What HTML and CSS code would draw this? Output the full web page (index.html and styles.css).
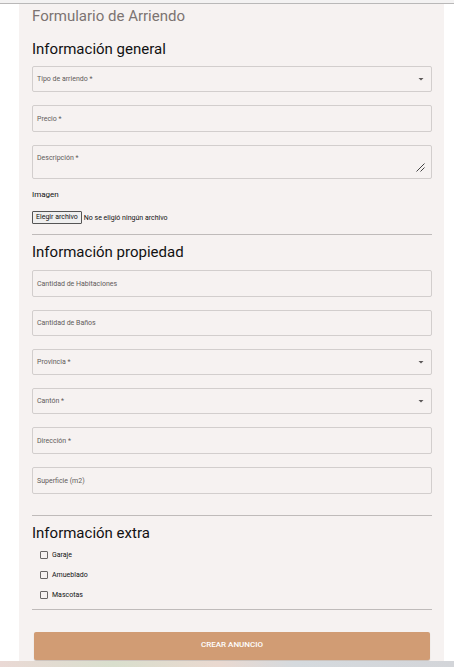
FILE: index.html
```html
<!DOCTYPE html>
<html lang="es">
<head>
<meta charset="utf-8">
<meta name="viewport" content="width=device-width, initial-scale=1">
<title>Formulario de Arriendo</title>
<link rel="stylesheet" href="styles.css">
</head>
<body>
<div class="topbar"></div>
<main class="card">
  <h1 class="title">Formulario de Arriendo</h1>
  <form class="form">
    <section class="section">
      <h2 class="heading">Información general</h2>
      <div class="fields">
        <div class="field field-select">
          <select class="control" id="tipo" required><option value=""></option></select>
          <label class="label" for="tipo">Tipo de arriendo *</label>
          <svg class="arrow" viewBox="0 0 6 3" aria-hidden="true"><path d="M.5 0h5L3 2.500z"/></svg>
        </div>
        <div class="field">
          <input class="control" id="precio" type="text" required>
          <label class="label" for="precio">Precio *</label>
        </div>
        <div class="field field-area">
          <textarea class="control" id="descripcion" required></textarea>
          <label class="label" for="descripcion">Descripción *</label>
          <svg class="grip" viewBox="0 0 9 9" aria-hidden="true"><path d="M.5 8.500L8.500.5M4.500 8.500L8.500 4.500"/></svg>
        </div>
      </div>
      <p class="caption">Imagen</p>
      <div class="file">
        <input class="file-input" id="imagen" type="file">
        <label class="file-button" for="imagen">Elegir archivo</label>
        <span class="file-name">No se eligió ningún archivo</span>
      </div>
    </section>
    <section class="section section-property">
      <h2 class="heading">Información propiedad</h2>
      <div class="fields">
        <div class="field">
          <input class="control" id="habitaciones" type="text">
          <label class="label" for="habitaciones">Cantidad de Habitaciones</label>
        </div>
        <div class="field field-short">
          <input class="control" id="banos" type="text">
          <label class="label" for="banos">Cantidad de Baños</label>
        </div>
        <div class="field field-select">
          <select class="control" id="provincia" required><option value=""></option></select>
          <label class="label" for="provincia">Provincia *</label>
          <svg class="arrow" viewBox="0 0 6 3" aria-hidden="true"><path d="M.5 0h5L3 2.500z"/></svg>
        </div>
        <div class="field field-select">
          <select class="control" id="canton" required><option value=""></option></select>
          <label class="label" for="canton">Cantón *</label>
          <svg class="arrow" viewBox="0 0 6 3" aria-hidden="true"><path d="M.5 0h5L3 2.500z"/></svg>
        </div>
        <div class="field">
          <input class="control" id="direccion" type="text" required>
          <label class="label" for="direccion">Dirección *</label>
        </div>
        <div class="field">
          <input class="control" id="superficie" type="text">
          <label class="label" for="superficie">Superficie (m2)</label>
        </div>
      </div>
    </section>
    <section class="section section-extra">
      <h2 class="heading">Información extra</h2>
      <div class="checks">
        <label class="check"><input class="box" type="checkbox">Garaje</label>
        <label class="check"><input class="box" type="checkbox">Amueblado</label>
        <label class="check"><input class="box" type="checkbox">Mascotas</label>
      </div>
    </section>
    <button class="submit" type="submit">CREAR ANUNCIO</button>
  </form>
</main>
<div class="footer"></div>
</body>
</html>
```
FILE: styles.css
```css
* {
  box-sizing: border-box;
}

body {
  margin: 0;
  background: #fff;
  color: #111;
  font: 7px/10px Roboto, "Liberation Sans", sans-serif;
}

.topbar {
  height: 4px;
  background: #f3f2f2;
  border-bottom: 1px solid #b9b8b8;
}

.card {
  margin: 0 10px 0 19px;
  padding: 2px 12px 1px 13px;
  background: #f6f2f1;
}

.title,
.heading {
  margin: 0;
  font-size: 15px;
  line-height: 20px;
  font-weight: 400;
}

.title {
  color: #7c7472;
}

.section {
  border-bottom: 1px solid #bfbbba;
}

.heading {
  padding: 13px 0 7px;
}

.section-property .heading {
  padding: 7px 0 8px;
}

.section-extra .heading {
  padding: 7px 0;
}

.fields {
  display: grid;
  gap: 13px;
}

.field {
  display: grid;
  grid-template-columns: 1fr auto;
  align-items: center;
  height: 27px;
  border: 1px solid #d2cecd;
  border-radius: 2px;
}

.field-select,
.field-short {
  height: 26px;
}

.field-area {
  height: 34px;
}

.control {
  grid-area: 1 / 1 / 2 / 3;
  width: 100%;
  height: 100%;
  margin: 0;
  padding: 0 4px;
  border: 0;
  background: transparent;
  color: inherit;
  font: inherit;
  appearance: none;
  resize: none;
}

.label {
  grid-area: 1 / 1;
  padding-left: 4px;
  color: #5f5b5a;
  pointer-events: none;
}

.field-area .label {
  align-self: start;
  padding-top: 7px;
}

.arrow {
  grid-area: 1 / 2;
  width: 6px;
  height: 3px;
  margin-right: 7px;
  fill: #5c5858;
  pointer-events: none;
}

.grip {
  grid-area: 1 / 2;
  align-self: end;
  width: 9px;
  height: 9px;
  margin: 0 6px 6px 0;
  fill: none;
  stroke: #444;
  pointer-events: none;
}

.caption {
  margin: 11px 0;
  font-size: 8px;
}

.file {
  display: flex;
  align-items: center;
  gap: 2px;
  padding-bottom: 10px;
}

.file-input {
  position: absolute;
  width: 1px;
  height: 1px;
  opacity: 0;
}

.file-button {
  padding: 0 3px 1px;
  border: 1px solid #555;
  border-radius: 1px;
  background: #efefef;
}

.section-property {
  padding-bottom: 21px;
}

.checks {
  display: grid;
  gap: 10px;
  padding: 0 8px 9px;
}

.check {
  display: flex;
  align-items: center;
  gap: 4px;
}

.box {
  width: 8px;
  height: 8px;
  margin: 0;
  border: 1px solid #6a6767;
  border-radius: 1px;
  appearance: none;
}

.box:checked {
  background: #d19c74;
}

.submit {
  display: block;
  width: calc(100% - 4px);
  height: 28px;
  margin: 22px 2px 0;
  padding: 0 0 2px;
  border: 0;
  border-radius: 2px;
  background: #d19c74;
  box-shadow: 0 1px 1px #c9bfb9;
  color: #fff;
  font: 500 8px/10px Roboto, "Liberation Sans", sans-serif;
}

.footer {
  height: 6px;
  background: linear-gradient(90deg, #ead9d5, #d9dfcd 25%, #ead9d0 48%, #d5dade 65%, #d3d5d9);
}
```
